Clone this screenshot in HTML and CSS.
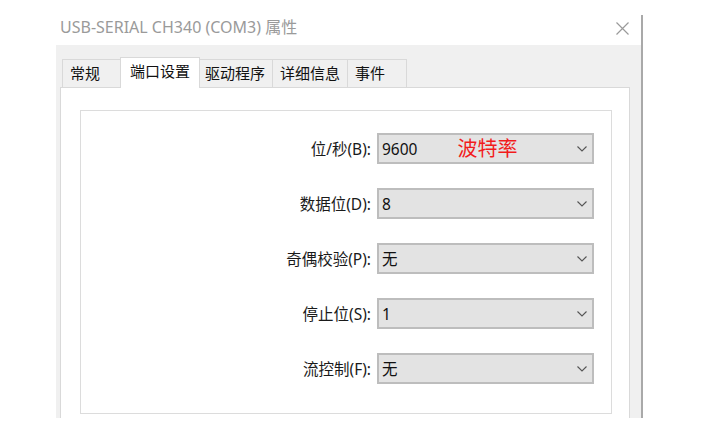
FILE: index.html
```html
<!DOCTYPE html>
<html lang="zh-CN">
<head>
<meta charset="utf-8">
<title>USB-SERIAL CH340 (COM3) 属性</title>
<link rel="stylesheet" href="styles.css">
</head>
<body>
<div class="window">
  <div class="titlebar">
    <span class="title">USB-SERIAL CH340 (COM3) 属性</span>
    <svg class="close" width="13" height="13" viewBox="0 0 13 13"><path d="M0.5 0.5L12.5 12.5M12.5 0.5L0.5 12.5" stroke="#9a9a9a" stroke-width="1.2" fill="none"/></svg>
  </div>
  <div class="dlg-body">
    <div class="tabs">
      <div class="tab">常规</div>
      <div class="tab active">端口设置</div>
      <div class="tab">驱动程序</div>
      <div class="tab">详细信息</div>
      <div class="tab">事件</div>
    </div>
    <div class="panel">
      <div class="group">
        <div class="row">
          <span class="lbl">位/秒(B):</span>
          <div class="select"><span class="val">9600</span><span class="note">波特率</span><svg class="chev" width="10" height="6" viewBox="0 0 10 6"><path d="M0.5 0.5L5 5L9.5 0.5" stroke="#555" stroke-width="1.1" fill="none"/></svg></div>
        </div>
        <div class="row">
          <span class="lbl">数据位(D):</span>
          <div class="select"><span class="val">8</span><svg class="chev" width="10" height="6" viewBox="0 0 10 6"><path d="M0.5 0.5L5 5L9.5 0.5" stroke="#555" stroke-width="1.1" fill="none"/></svg></div>
        </div>
        <div class="row">
          <span class="lbl">奇偶校验(P):</span>
          <div class="select"><span class="val">无</span><svg class="chev" width="10" height="6" viewBox="0 0 10 6"><path d="M0.5 0.5L5 5L9.5 0.5" stroke="#555" stroke-width="1.1" fill="none"/></svg></div>
        </div>
        <div class="row">
          <span class="lbl">停止位(S):</span>
          <div class="select"><span class="val">1</span><svg class="chev" width="10" height="6" viewBox="0 0 10 6"><path d="M0.5 0.5L5 5L9.5 0.5" stroke="#555" stroke-width="1.1" fill="none"/></svg></div>
        </div>
        <div class="row">
          <span class="lbl">流控制(F):</span>
          <div class="select"><span class="val">无</span><svg class="chev" width="10" height="6" viewBox="0 0 10 6"><path d="M0.5 0.5L5 5L9.5 0.5" stroke="#555" stroke-width="1.1" fill="none"/></svg></div>
        </div>
      </div>
    </div>
  </div>
</div>
</body>
</html>
```
FILE: styles.css
```css
html, body {
  margin: 0;
  padding: 0;
  background: #ffffff;
}
body {
  width: 719px;
  height: 446px;
  overflow: hidden;
  padding: 15px 0 0 56px;
  box-sizing: border-box;
  font-family: "Noto Sans", "Noto Sans CJK SC", sans-serif;
  color: #1a1a1a;
}
.window {
  position: relative;
  width: 587px;
  height: 403px;
  box-sizing: border-box;
  border-right: 2px solid #a9a9a9;
  display: flex;
  flex-direction: column;
  overflow: hidden;
}
.window::after {
  content: "";
  position: absolute;
  right: -2px;
  top: 18px;
  width: 2px;
  height: 3px;
  background: #555;
}
.titlebar {
  height: 30px;
  flex: none;
  background: #fff;
  display: flex;
  align-items: center;
  justify-content: space-between;
  padding: 0 12px 0 4px;
}
.title {
  font-size: 16px;
  color: #9a9a9a;
  line-height: 1;
  margin-top: -7px;
}
.close {
  display: block;
  margin-top: -4px;
}
.dlg-body {
  flex: 1;
  background: #f0f0f0;
  padding: 12px 11px 0 4px;
  display: flex;
  flex-direction: column;
  min-height: 0;
}
.tabs {
  height: 30px;
  flex: none;
  display: flex;
  align-items: flex-end;
  padding-left: 2px;
}
.tab {
  height: 28px;
  box-sizing: border-box;
  min-width: 60px;
  padding: 0 7px;
  border: 1px solid #d9d9d9;
  border-bottom: none;
  margin-left: -1px;
  background: #f0f0f0;
  font-size: 15px;
  line-height: 26px;
  color: #111;
  white-space: nowrap;
}
.tab:first-child {
  margin-left: 0;
}
.tab.active {
  position: relative;
  z-index: 1;
  height: 31px;
  margin: 0 -2px -1px -2px;
  padding: 0 9px 0 9px;
  background: #fff;
  line-height: 27px;
}
.panel {
  flex: 1;
  background: #fff;
  border: 1px solid #d9d9d9;
  border-bottom: none;
  padding: 22px 17px 0 19px;
  min-height: 0;
}
.group {
  height: 304px;
  box-sizing: border-box;
  border: 1px solid #dcdcdc;
  padding: 22px 17px 0 0;
  display: flex;
  flex-direction: column;
  gap: 24px;
}
.row {
  height: 31px;
  display: flex;
  align-items: center;
  justify-content: flex-end;
  gap: 6px;
}
.lbl {
  font-size: 15.5px;
  color: #1a1a1a;
  white-space: nowrap;
}
.select {
  width: 217px;
  height: 31px;
  box-sizing: border-box;
  background: #e3e3e3;
  border: 2px solid #bdbdbd;
  padding: 0 5px 0 3px;
  display: flex;
  align-items: center;
}
.val {
  font-size: 15.5px;
  color: #111;
}
.note {
  font-size: 20px;
  color: #f21c1c;
  margin-left: 40px;
  line-height: 1;
}
.chev {
  margin-left: auto;
  display: block;
}
```
